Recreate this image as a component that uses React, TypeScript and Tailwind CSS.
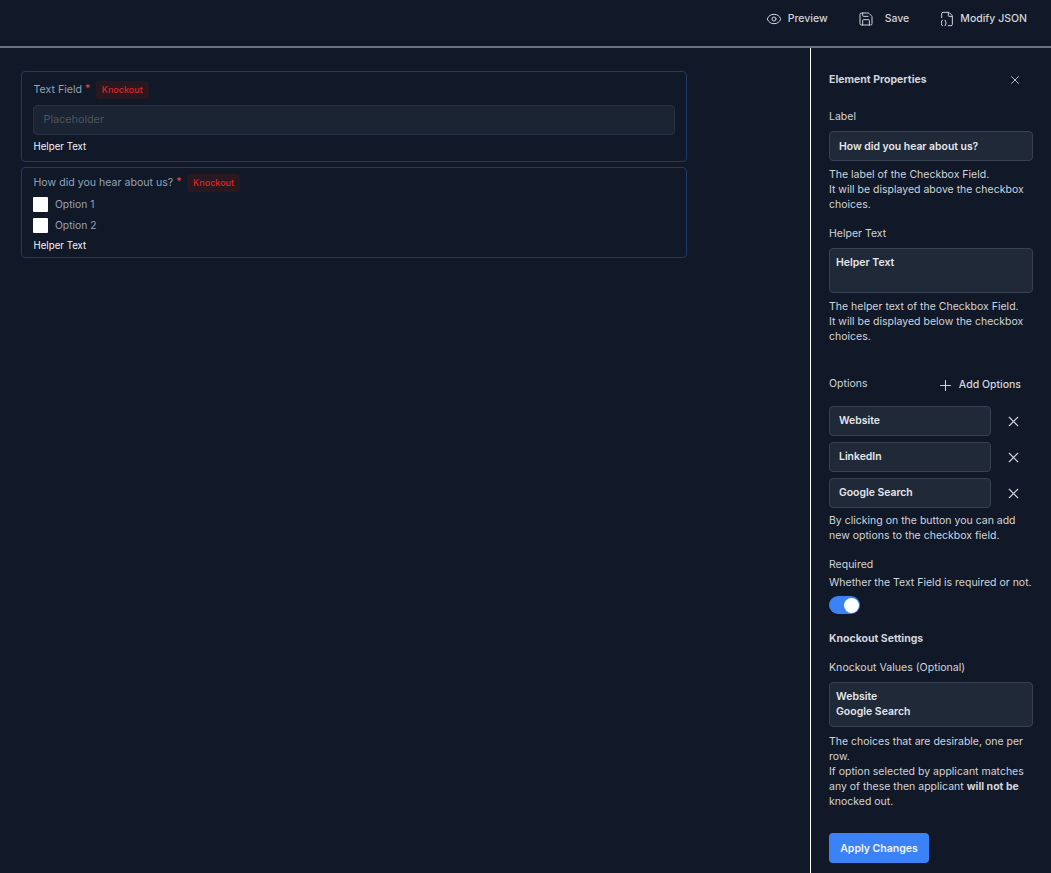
import { Eye, Save, FileJson2, X, Plus } from "lucide-react";

function Knockout() {
  return <span className="ml-[5.5px] flex h-[18px] items-center rounded-[3px] bg-[#2a1820] px-[6px] text-[9px] font-medium text-[#dc2626]">Knockout</span>;
}

function CardLabel({ text }: { text: string }) {
  return (
    <div className="flex h-[18px] items-center pl-[0.5px] text-[10.6px] leading-[18px] text-[#94a3b8]">
      <span>{text}</span>
      <span className="ml-[3px] -mt-[3px] text-[#ef4444]">*</span>
      <Knockout />
    </div>
  );
}

function Help({ children }: { children: React.ReactNode }) {
  return <p className="text-[10.5px] leading-[15px] text-[#d1d5db]">{children}</p>;
}

function Option({ text }: { text: string }) {
  return (
    <div className="flex items-center">
      <div className="flex h-[30px] w-[162px] items-center rounded-[4px] border border-[#374151] bg-[#1f2937] pl-[9px] text-[10.4px] font-semibold text-[#e5e7eb]">{text}</div>
      <X className="ml-[14px] h-[17px] w-[17px] text-[#d1d5db]" strokeWidth={1.6} />
    </div>
  );
}

export default function App() {
  return (
    <div className="flex h-[873px] w-[1051px] flex-col overflow-hidden bg-[#111827] text-[11px]" style={{ fontFamily: "Inter, sans-serif" }}>
      <header className="flex h-[48px] shrink-0 items-start justify-end border-b-2 border-[#6b7280] pr-[24px] pt-[11px] text-[10.5px] font-medium text-[#d1d5db]">
        <div className="flex h-[16px] items-center">
          <Eye className="h-[16px] w-[16px]" strokeWidth={1.5} />
          <span className="ml-[6px]">Preview</span>
        </div>
        <div className="ml-[30px] flex h-[16px] items-center">
          <Save className="h-[16px] w-[16px]" strokeWidth={1.5} />
          <span className="ml-[11px]">Save</span>
        </div>
        <div className="ml-[30px] flex h-[16px] items-center">
          <FileJson2 className="h-[16px] w-[16px]" strokeWidth={1.5} />
          <span className="ml-[5px]">Modify JSON</span>
        </div>
      </header>
      <div className="flex min-h-0 flex-1">
        <main className="flex w-[762px] shrink-0 flex-col gap-[5px] pl-[21px] pr-[75px] pt-[23px]">
          <section className="h-[91px] rounded-[4px] border border-[#1e3a6e] px-[11px] pt-[9px]">
            <CardLabel text="Text Field" />
            <div className="mt-[6px] flex h-[30px] items-center rounded-[4px] border border-[#273244] bg-[#1a2432] pl-[9.5px] text-[10.8px] text-[#4b5563]">Placeholder</div>
            <p className="mt-[5px] pl-[0.5px] text-[9.7px] leading-[14px] text-[#f3f4f6]">Helper Text</p>
          </section>
          <section className="h-[91px] rounded-[4px] border border-[#1e3a6e] px-[11px] pt-[6px]">
            <CardLabel text="How did you hear about us?" />
            <div className="mt-[4px] flex h-[17px] items-center text-[10.3px] text-[#94a3b8]">
              <span className="h-[15px] w-[15px] rounded-[1px] bg-white" />
              <span className="ml-[7px]">Option 1</span>
            </div>
            <div className="mt-[4px] flex h-[17px] items-center text-[10.3px] text-[#94a3b8]">
              <span className="h-[15px] w-[15px] rounded-[1px] bg-white" />
              <span className="ml-[7px]">Option 2</span>
            </div>
            <p className="mt-[5px] pl-[0.5px] text-[9.7px] leading-[14px] text-[#f3f4f6]">Helper Text</p>
          </section>
        </main>
        <aside className="w-[241px] shrink-0 border-l border-white pl-[18px] pr-[18px] pt-[25px] ml-[48px] -mr-[48px]">
          <div className="flex h-[14px] items-center justify-between pr-[11px]">
            <h2 className="text-[10.5px] font-bold text-[#d1d5db]">Element Properties</h2>
            <X className="h-[14px] w-[14px] text-[#d1d5db]" strokeWidth={1.5} />
          </div>
          <div className="mt-[23px] text-[10.5px] leading-[14px] text-[#d1d5db]">Label</div>
          <div className="mt-[7px] flex h-[30px] items-center rounded-[4px] border border-[#374151] bg-[#1f2937] pl-[9px] pt-[1px] text-[10.4px] font-semibold text-[#e5e7eb]">How did you hear about us?</div>
          <div className="mt-[6px]">
            <Help>The label of the Checkbox Field.<br />It will be displayed above the checkbox choices.</Help>
          </div>
          <div className="mt-[15px] text-[10.5px] leading-[14px] text-[#d1d5db]">Helper Text</div>
          <div className="mt-[7px] h-[45px] rounded-[4px] border border-[#374151] bg-[#1f2937] pl-[6px] pt-[6px] text-[10.5px] font-semibold leading-[15px] text-[#e5e7eb]">Helper Text</div>
          <div className="mt-[6px]">
            <Help>The helper text of the Checkbox Field.<br />It will be displayed below the checkbox choices.</Help>
          </div>
          <div className="mt-[32px] flex h-[16px] items-center justify-between pr-[12px]">
            <span className="text-[10.5px] text-[#d1d5db]">Options</span>
            <span className="flex translate-y-[1px] items-center text-[10.5px] font-medium text-[#d1d5db]">
              <Plus className="mr-[5px] h-[17px] w-[17px]" strokeWidth={1.5} />Add Options
            </span>
          </div>
          <div className="mt-[14px] flex flex-col gap-[6px]">
            <Option text="Website" />
            <Option text="LinkedIn" />
            <Option text="Google Search" />
          </div>
          <div className="mt-[5px]">
            <Help>By clicking on the button you can add new options to the checkbox field.</Help>
          </div>
          <div className="mt-[15px] text-[10.5px] leading-[14px] text-[#d1d5db]">Required</div>
          <div className="mt-[3px] whitespace-nowrap"><Help>Whether the Text Field is required or not.</Help></div>
          <div className="mt-[6px] flex h-[18px] w-[31px] items-center justify-end rounded-full bg-[#3b82f6] pr-[1px]">
            <span className="h-[15px] w-[15px] rounded-full bg-white" />
          </div>
          <div className="mt-[18px] text-[10.5px] font-bold leading-[14px] text-[#d1d5db]">Knockout Settings</div>
          <div className="mt-[15px] text-[10.6px] leading-[14px] text-[#d1d5db]">Knockout Values (Optional)</div>
          <div className="mt-[7px] h-[45px] rounded-[4px] border border-[#374151] bg-[#1f2937] pl-[6px] pt-[6px] text-[10.5px] font-semibold leading-[15px] text-[#e5e7eb]">Website<br />Google Search</div>
          <div className="mt-[7px]">
            <Help>The choices that are desirable, one per row.<br />If option selected by applicant matches any of these then applicant <b className="font-bold">will not be</b> knocked out.</Help>
          </div>
          <button className="mt-[24px] flex h-[30px] w-[100px] items-center justify-center rounded-[4px] bg-[#3b82f6] pt-[1px] text-[10.5px] font-semibold text-[#f3f4f6]">Apply Changes</button>
        </aside>
      </div>
    </div>
  );
}
